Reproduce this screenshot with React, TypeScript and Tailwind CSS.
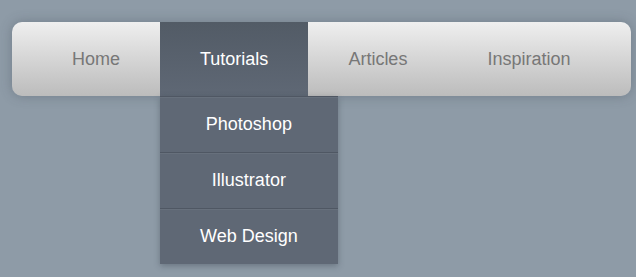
import React from 'react';

const items = ['Home', 'Tutorials', 'Articles', 'Inspiration'];
const subItems = ['Photoshop', 'Illustrator', 'Web Design'];

export default function App() {
    return (
        <div className="w-[636px] h-[277px] bg-[#8e9ba7] pt-[22px] pl-3 font-['Liberation_Sans',Arial,sans-serif] overflow-hidden">
            {/* メニューバー */}
            <ul className="flex w-[619px] h-[74px] pl-5 rounded-[10px] bg-gradient-to-b from-[#efefef] to-[#bcbcbc] shadow-[0_0_12px_rgba(60,70,80,0.35)]">
                {items.map((item) => {
                    const active = item === 'Tutorials';
                    return (
                        <li key={item} className="relative">
                            <div
                                className={
                                    active
                                        ? 'h-[74px] px-10 flex items-center text-[18px] text-white bg-gradient-to-b from-[#525b66] to-[#5f6875]'
                                        : 'h-[74px] px-10 flex items-center text-[18px] text-[#777777]'
                                }
                            >
                                {item}
                            </div>
                            {/* ドロップダウン */}
                            {active && (
                                <ul className="absolute top-full left-0 bg-[#5f6875] shadow-[0_2px_6px_rgba(40,50,60,0.35)] z-10">
                                    {subItems.map((sub) => (
                                        <li
                                            key={sub}
                                            className="h-[56px] px-10 flex items-center justify-center whitespace-nowrap text-[18px] text-white border-t border-[#4f5763] shadow-[inset_0_1px_0_#67707c]"
                                        >
                                            {sub}
                                        </li>
                                    ))}
                                </ul>
                            )}
                        </li>
                    );
                })}
            </ul>
        </div>
    );
}
